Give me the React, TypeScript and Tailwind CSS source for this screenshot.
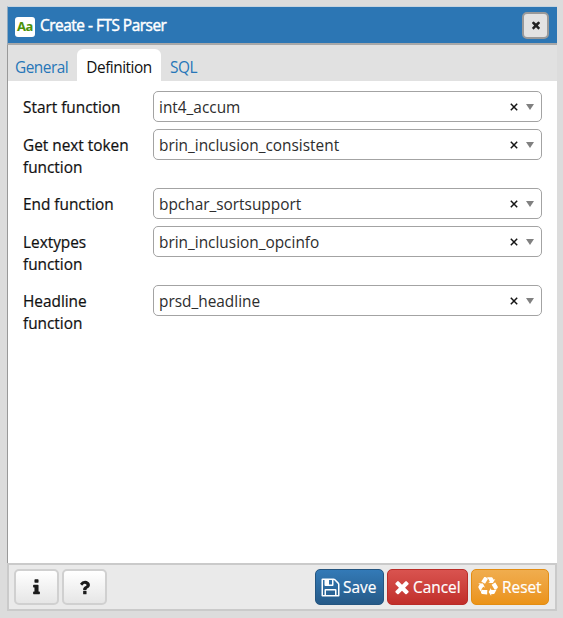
import React from "react";

const icons = {
  close:
    "M1490 1322q0 40-28 68l-136 136q-28 28-68 28t-68-28l-294-294-294 294q-28 28-68 28t-68-28l-136-136q-28-28-28-68t28-68l294-294-294-294q-28-28-28-68t28-68l136-136q28-28 68-28t68 28l294 294 294-294q28-28 68-28t68 28l136 136q28 28 28 68t-28 68l-294 294 294 294q28 28 28 68z",
  save: "M512 1536h768v-384h-768v384zm896 0h128v-896q0-14-10-38.5t-20-34.5l-281-281q-10-10-34-20t-39-10v416q0 40-28 68t-68 28h-576q-40 0-68-28t-28-68v-416h-128v1280h128v-416q0-40 28-68t68-28h832q40 0 68 28t28 68v416zm-384-928v-320q0-13-9.5-22.5t-22.5-9.5h-192q-13 0-22.5 9.5t-9.5 22.5v320q0 13 9.5 22.5t22.5 9.5h192q13 0 22.5-9.5t9.5-22.5zm640 32v928q0 40-28 68t-68 28h-1344q-40 0-68-28t-28-68v-1344q0-40 28-68t68-28h928q40 0 88 20t76 48l280 280q28 28 48 76t20 88z",
  info: "M1216 1344v128q0 26-19 45t-45 19h-512q-26 0-45-19t-19-45v-128q0-26 19-45t45-19h64v-384h-64q-26 0-45-19t-19-45v-128q0-26 19-45t45-19h384q26 0 45 19t19 45v576h64q26 0 45 19t19 45zm-128-1152v192q0 26-19 45t-45 19h-256q-26 0-45-19t-19-45v-192q0-26 19-45t45-19h256q26 0 45 19t19 45z",
  question:
    "M1088 1256v240q0 16-12 28t-28 12h-240q-16 0-28-12t-12-28v-240q0-16 12-28t28-12h240q16 0 28 12t12 28zm316-600q0 54-15.5 101t-35 76.5-55 59.5-57.5 43.5-61 35.5q-41 23-68.5 65t-27.5 67q0 17-12 32.5t-28 15.5h-240q-15 0-25.5-18.5t-10.5-37.5v-45q0-83 65-156.5t143-108.5q59-27 84-56t25-76q0-42-46.5-74t-107.5-32q-65 0-108 29-35 25-107 115-13 16-31 16-12 0-25-8l-164-125q-13-10-15.5-25t5.5-28q160-266 464-266 80 0 161 31t146 83 106 127.5 41 158.5z",
  recycle:
    "M836 1169l-15 368-2 22-420-29q-36-3-67-31.5t-47-65.5q-11-27-14.5-55t4-65 12-55 21.5-64 19-53q78 12 509 28zm-387-586l180 379-147-92q-63 72-111.5 144.5t-72.5 125-39.5 94.5-18.5 63l-4 21-190-357q-17-26-18-56t6-47l8-18q35-63 114-188l-140-86zm1231 517l-188 359q-12 29-36.5 46.5t-43.5 20.5l-18 4q-71 7-219 12l8 164-230-367 211-362 7 173q170 16 283 5t170-33zm-785-924q-47 63-265 435l-317-187-19-12 225-356q20-31 60-45t80-10q24 2 48.5 12t42 21 41.5 33 36 34.5 36 39.5 32 35zm655 307l212 363q18 37 12.5 76t-27.5 74q-13 20-33 37t-38 28-48.5 22-47 16-51.5 14-46 12q-34-72-265-436l313-195zm-143-226l142-83-220 373-419-20 151-86q-34-89-75-166t-75.5-123.5-64.5-80-47-46.5l-17-13 405 1q31-3 58 10.5t39 28.5l11 15q39 61 112 190z",
};

function Icon({ name, className }: { name: keyof typeof icons; className: string }) {
  return (
    <svg viewBox="0 0 1792 1792" fill="currentColor" className={`shrink-0 ${className}`}>
      <path d={icons[name]} />
    </svg>
  );
}

const rows = [
  { label: "Start function", value: "int4_accum", height: "h-[38px]" },
  { label: "Get next token function", value: "brin_inclusion_consistent", height: "h-[59px]" },
  { label: "End function", value: "bpchar_sortsupport", height: "h-[38px]" },
  { label: "Lextypes function", value: "brin_inclusion_opcinfo", height: "h-[59px]" },
  { label: "Headline function", value: "prsd_headline", height: "h-[59px]" },
];

function SelectRow({ label, value, height }: (typeof rows)[number]) {
  return (
    <div className={`flex items-start ${height}`}>
      <label className="w-[130px] shrink-0 pt-[6px] pr-4 leading-[22px] tracking-[-0.02px] text-[#111] [-webkit-text-stroke:0.2px_#111]">
        {label}
      </label>
      <div className="flex h-[31px] flex-1 items-center rounded-[5px] border border-[#a3a3a3] pr-[7px] pl-[5px] text-[#2d2d2d]">
        <span className="flex-1 pt-[2px] leading-[22px]">{value}</span>
        <svg viewBox="0 0 8 8" className="mt-px mr-2 h-2 w-2 text-[#151515]">
          <path d="M.8 .8l6.4 6.4M7.2 .8L.8 7.2" stroke="currentColor" strokeWidth="1.5" />
        </svg>
        <svg viewBox="0 0 8 6" className="h-[6px] w-[8px] text-[#808080]">
          <path d="M0 0h8L4 6z" fill="currentColor" />
        </svg>
      </div>
    </div>
  );
}

export default function App() {
  return (
    <div className="h-[618px] w-[563px] bg-[#dcdcdc] pt-[6px] pl-[7px] font-['Open_Sans',sans-serif] text-[15.4px]">
      <div className="flex h-[605px] w-[550px] flex-col">
        <header className="flex h-[39px] shrink-0 items-center border-t border-b-2 border-l border-t-[#c5d3df] border-b-[#a8a8a8] border-l-[#8fa9be] bg-[#2c76b4] pr-2 pl-[7px]">
          <span className="mt-[3px] flex h-5 w-5 items-center justify-center rounded-[3px] bg-white font-['Noto_Sans'] text-[13px] leading-none font-bold tracking-[-0.4px] text-[#4c9208]">
            Aa
          </span>
          <h1 className="ml-[5px] flex-1 pt-[2px] text-[15.4px] leading-5 font-normal tracking-[-0.48px] text-white [-webkit-text-stroke:0.45px_white]">
            Create - FTS Parser
          </h1>
          <button className="flex h-[27px] w-[27px] items-center justify-center rounded-[5px] border-2 border-[#999] bg-[#e2e2e2] text-[#222]">
            <Icon name="close" className="h-3 w-3" />
          </button>
        </header>
        <div className="flex min-h-0 flex-1 flex-col border-l border-[#999] bg-white">
          <nav className="flex h-9 shrink-0 items-end bg-[#e1e1e1] pl-[7px] leading-[22px] tracking-[-0.5px] text-[#2676b8]">
            <span className="w-[62px] pb-[2px]">General</span>
            <span className="flex h-8 w-[84px] items-start justify-center rounded-t-[6px] bg-white pt-[8px] text-[#111]">
              Definition
            </span>
            <span className="pb-[2px] pl-[9px]">SQL</span>
          </nav>
          <main className="pt-[10px] pr-[15px] pl-[15px]">
            {rows.map((row) => (
              <SelectRow key={row.label} {...row} />
            ))}
          </main>
        </div>
        <footer className="flex h-12 shrink-0 items-center border-2 border-[#cacaca] bg-[#eaeaea] pr-[6px] pl-[5px] text-white">
          <button className="flex h-9 w-[45px] items-center justify-center rounded-[5px] border-2 border-[#d0d0d0] bg-linear-to-b from-white to-[#e6e6e6] text-[#1c1c1c]">
            <Icon name="info" className="h-[19px] w-[19px]" />
          </button>
          <button className="ml-[3px] flex h-9 w-[45px] items-center justify-center rounded-[5px] border-2 border-[#d0d0d0] bg-linear-to-b from-white to-[#e6e6e6] text-[#1c1c1c]">
            <Icon name="question" className="h-[19px] w-[19px]" />
          </button>
          <button className="ml-auto flex h-9 w-[69px] items-center rounded-[5px] border border-[#245580] bg-linear-to-b from-[#337ab7] to-[#265a88] pl-[4px] [-webkit-text-stroke:0.2px_white]">
            <Icon name="save" className="h-[21px] w-[21px]" />
            <span className="ml-[2px] pt-[2px]">Save</span>
          </button>
          <button className="ml-[3px] flex h-9 w-[81px] items-center rounded-[5px] border border-[#b92c28] bg-linear-to-b from-[#d9534f] to-[#c12e2a] pl-[4px] [-webkit-text-stroke:0.2px_white]">
            <Icon name="close" className="h-5 w-5" />
            <span className="ml-px pt-[2px]">Cancel</span>
          </button>
          <button className="ml-[3px] flex h-9 w-[78px] items-center rounded-[5px] border border-[#e38d13] bg-linear-to-b from-[#f0ad4e] to-[#eb9316] pl-[6px] [-webkit-text-stroke:0.2px_white]">
            <Icon name="recycle" className="h-5 w-5" />
            <span className="ml-1 pt-[2px]">Reset</span>
          </button>
        </footer>
      </div>
    </div>
  );
}
